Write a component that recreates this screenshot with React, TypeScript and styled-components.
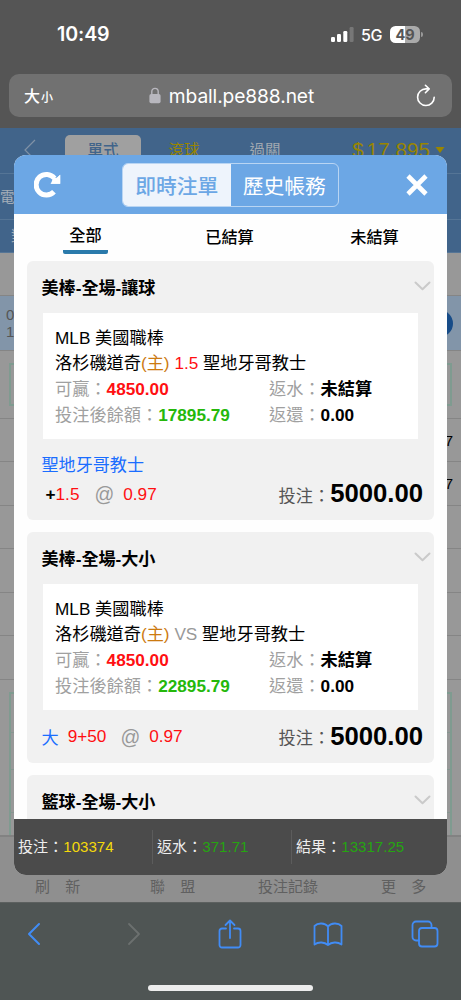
import React from "react";
import styled, { createGlobalStyle } from "styled-components";

const GlobalStyle = createGlobalStyle`
  * { box-sizing: border-box; }
  body {
    margin: 0;
    background: #555;
    font-family: "Liberation Sans", "Noto Sans CJK TC", sans-serif;
    color: #000;
  }
`;

const Phone = styled.div`
  width: 461px;
  height: 1000px;
  overflow: hidden;
  display: flex;
  flex-direction: column;
  background: #555;
`;

/* ---- system and browser chrome ---- */

const StatusBar = styled.header`
  height: 74px;
  padding: 21px 38px 0 57px;
  display: flex;
  justify-content: space-between;
  font-family: Inter, "Liberation Sans", sans-serif;
  color: #fff;
`;

const Clock = styled.div`
  font-size: 19.6px;
  font-weight: 600;
  line-height: 27px;
  letter-spacing: -0.1px;
`;

const StatusIcons = styled.div`
  display: flex;
  align-items: center;
  height: 27px;
`;

const Network = styled.span`
  margin: 1px 0 0 7px;
  width: 29px;
  font-size: 16px;
  font-weight: 500;
  letter-spacing: -0.4px;
`;

const Battery = styled.div`
  width: 30px;
  height: 17px;
  border-radius: 5.5px;
  background: linear-gradient(90deg, #fff 50%, #aaa 50%);
  color: #555;
  font-size: 14.5px;
  font-weight: 700;
  line-height: 17px;
  text-align: center;
`;

const BatteryTip = styled.div`
  width: 2px;
  height: 5px;
  margin-left: 1px;
  border-radius: 0 2px 2px 0;
  background: #999;
`;

const AddressBar = styled.div`
  height: 43px;
  margin: 0 9px 11px;
  padding: 0 16px 0 15px;
  border-radius: 10px;
  background: #717171;
  display: flex;
  align-items: center;
  justify-content: space-between;
  color: #fff;
  flex-shrink: 0;
`;

const TextSize = styled.div`
  width: 33px;
  font: 500 16px "Noto Sans CJK TC", sans-serif;
  line-height: 30px;
  white-space: nowrap;
  small { font-size: 12px; margin-left: 1px; }
`;

const Address = styled.div`
  display: flex;
  align-items: center;
  margin-right: 10px;
  font-family: Inter, sans-serif;
  font-size: 19.2px;
  letter-spacing: -0.1px;
  svg { margin-right: 8px; }
`;

const BrowserToolbar = styled.footer`
  height: 98px;
  flex-shrink: 0;
  display: flex;
  flex-direction: column;
  justify-content: space-between;
  padding: 16px 21px 9px 26px;
  background: #4f5554;
  border-top: 1px solid #5c605f;
`;

const ToolIcons = styled.div`
  display: grid;
  grid-template-columns: 100px 92px 95px 98px 1fr;
  align-items: center;
`;

const HomeIndicator = styled.div`
  width: 165px;
  height: 6px;
  margin-left: 122px;
  border-radius: 3px;
  background: #ededed;
`;

/* ---- dimmed page behind the dialog ---- */

const Stage = styled.main`
  position: relative;
  height: 774px;
  flex-shrink: 0;
  overflow: hidden;
`;

const Page = styled.div`
  height: 774px;
  display: flex;
  flex-direction: column;
  background: #989898;
`;

const PageNav = styled.div`
  height: 46px;
  flex-shrink: 0;
  display: flex;
  align-items: flex-start;
  padding: 7px 15px 0 23px;
  background: #41648a;
  border-bottom: 1px solid #557596;
  font-size: 15.5px;
  line-height: 32px;
`;

const NavTab = styled.div<{ $active?: boolean; $tone?: string; $w: number }>`
  width: ${(p) => p.$w}px;
  height: 38px;
  text-align: center;
  border-radius: 5px;
  background: ${(p) => (p.$active ? "#a0a0a0" : "transparent")};
  color: ${(p) => p.$tone ?? "#41648a"};
  font-weight: ${(p) => (p.$active ? 500 : 400)};
`;

const Balance = styled.div`
  margin-left: auto;
  display: flex;
  align-items: center;
  font-size: 20.5px;
  line-height: 30px;
  color: #998500;
  letter-spacing: 0.1px;
  svg { margin-left: 5px; }
`;

const Currency = styled.span`
  margin-right: 3px;
`;

const BlueRow = styled.div<{ $h: number; $indent?: number }>`
  height: ${(p) => p.$h}px;
  flex-shrink: 0;
  padding-left: ${(p) => p.$indent ?? 0}px;
  line-height: ${(p) => p.$h}px;
  font-size: 14.5px;
  white-space: nowrap;
  background: #41648a;
  border-bottom: 1px solid #557596;
  color: #a5aeb8;
`;

const Row = styled.div<{ $h: number; $bg?: string }>`
  height: ${(p) => p.$h}px;
  flex-shrink: 0;
  display: flex;
  align-items: center;
  justify-content: space-between;
  padding: 0 8px;
  background: ${(p) => p.$bg ?? "#989898"};
  border-bottom: 1px solid #858585;
`;

const GameTime = styled.div`
  margin-left: -2px;
  font-size: 15px;
  line-height: 17.5px;
  color: #555;
`;

const RoundButton = styled.div`
  width: 27px;
  height: 27px;
  border-radius: 50%;
  background: #174c88;
  color: #8fa5bd;
  text-align: center;
  line-height: 26px;
`;

const OddsBox = styled.div`
  flex: 1;
  height: 43px;
  margin: 0 1px;
  border: 2px solid #7f9b90;
`;

const Odds = styled.div`
  margin-left: auto;
  font-size: 15px;
`;

const OddsGrid = styled.div`
  height: 143px;
  margin: 12px 9px 0;
  flex-shrink: 0;
  display: grid;
  grid-template-rows: 39px 37px 43px 1fr;
  border: 2px solid #7f9b90;
  border-bottom: 0;
`;

const OddsCell = styled.div`
  border-bottom: 1px solid #869690;
`;

const PageTabs = styled.div`
  flex: 1;
  display: grid;
  grid-template-columns: 115px 108px 123px 1fr;
  align-items: end;
  padding: 0 0 4px 35px;
  background: #8f8f8f;
  border-top: 2px solid #828282;
  color: #606060;
  font-size: 15px;
  line-height: 22px;
  white-space: pre;
`;

const PageTab = styled.span<{ $spread?: boolean }>`
  word-spacing: ${(p) => (p.$spread ? "11px" : "0")};
`;

/* ---- bet history dialog ---- */

const Dialog = styled.section`
  position: absolute;
  left: 14px;
  top: 27px;
  width: 433px;
  height: 720px;
  border-radius: 12px;
  overflow: hidden;
  display: flex;
  flex-direction: column;
  background: #fefefe;
`;

const DialogHeader = styled.div`
  height: 59px;
  flex-shrink: 0;
  display: flex;
  align-items: center;
  justify-content: space-between;
  padding: 0 19px 0 20px;
  background: #6ca7e5;
`;

const Segmented = styled.div`
  width: 217px;
  height: 44px;
  display: flex;
  border: 1px solid #b9d5f3;
  border-radius: 6px;
  overflow: hidden;
  margin-right: 6px;
`;

const Segment = styled.div<{ $active?: boolean }>`
  flex: 1;
  text-align: center;
  line-height: 45px;
  font-size: 20.8px;
  font-weight: ${(p) => (p.$active ? 500 : 400)};
  background: ${(p) => (p.$active ? "#eef4fc" : "transparent")};
  color: ${(p) => (p.$active ? "#6ca7e5" : "#fff")};
`;

const FilterTabs = styled.div`
  height: 47px;
  flex-shrink: 0;
  display: grid;
  grid-template-columns: 143px 145px 145px;
  justify-items: center;
  align-items: start;
`;

const FilterTab = styled.div<{ $active?: boolean }>`
  height: 40px;
  padding: 0 6px;
  line-height: ${(p) => (p.$active ? 43 : 47)}px;
  font-size: 16.2px;
  font-weight: 500;
  border-bottom: ${(p) => (p.$active ? "4px solid #2a7aab" : "0")};
  border-radius: 2px;
`;

const CardList = styled.div`
  flex: 1;
  min-height: 0;
  overflow: hidden;
  padding: 0 13px;
  display: flex;
  flex-direction: column;
  gap: 12px;
`;

const Card = styled.article`
  flex-shrink: 0;
  border-radius: 6px;
  background: #f1f1f1;
`;

const CardTitle = styled.div`
  height: 51.5px;
  display: flex;
  align-items: center;
  justify-content: space-between;
  padding: 0 3.5px 1px 14.5px;
  font-size: 17.1px;
  font-weight: 700;
`;

const Detail = styled.div`
  height: 126.5px;
  margin: 0 16px;
  padding: 13.2px 12px 0;
  background: #fff;
  font-size: 17.2px;
  line-height: 25.8px;
  white-space: nowrap;
`;

const DetailLine = styled.div`
  height: 25.8px;
  display: grid;
  grid-template-columns: 214px 1fr;
`;

const Tone = styled.span<{ $c: string }>`
  color: ${(p) => p.$c};
`;

const Label = styled.span`
  color: #a0a0a0;
`;

const Value = styled.b<{ $c?: string }>`
  color: ${(p) => p.$c ?? "#000"};
`;

const Sign = styled(Value)`
  margin-left: 4px;
`;

const Pick = styled.div`
  padding: 14px 14.5px 0;
  height: 39px;
  font-size: 17.1px;
  line-height: 25px;
  color: #1a6dff;
`;

const Side = styled.span`
  margin-right: 9px;
  color: #1a6dff;
`;

const StakeRow = styled.div<{ $h: number; $lift?: number }>`
  height: ${(p) => p.$h}px;
  padding: 0 11px ${(p) => p.$lift ?? 0}px 14.5px;
  display: flex;
  align-items: center;
  justify-content: space-between;
  font-size: 17.2px;
`;

const Selection = styled.div`
  display: flex;
  align-items: center;
  color: #ff0f12;
`;

const At = styled.span<{ $before: number }>`
  margin: 0 9px 0 ${(p) => p.$before}px;
  font-size: 19.5px;
  line-height: 24px;
  color: #999;
`;

const Stake = styled.div`
  display: flex;
  align-items: center;
  color: #555;
  b { font-size: 25.7px; line-height: 30px; color: #000; margin-bottom: 2px; }
`;

const Totals = styled.div`
  height: 56px;
  flex-shrink: 0;
  display: grid;
  grid-template-columns: 139px 139px 1fr;
  align-items: center;
  background: #4b4b4b;
  color: #eee;
  font-size: 15.1px;
`;

const Total = styled.div<{ $c: string }>`
  height: 34px;
  line-height: 34px;
  padding-left: 4px;
  white-space: nowrap;
  border-right: 1px solid #5c5c5c;
  &:last-child { border-right: 0; }
  span { color: ${(p) => p.$c}; }
`;

const RED = "#ff0f12";
const GREEN = "#25b80b";

type Bet = {
  title: string;
  middle: React.ReactNode;
  balance: string;
  pick?: string;
  selection: React.ReactNode;
};

const bets: Bet[] = [
  {
    title: "美棒-全場-讓球",
    middle: <Tone $c={RED}>1.5</Tone>,
    balance: "17895.79",
    pick: "聖地牙哥教士",
    selection: (
      <>
        <Sign>+</Sign>1.5<At $before={15}>@</At>0.97
      </>
    ),
  },
  {
    title: "美棒-全場-大小",
    middle: <Tone $c="#999">VS</Tone>,
    balance: "22895.79",
    selection: (
      <>
        <Side>大</Side>9+50<At $before={14}>@</At>0.97
      </>
    ),
  },
];

const Chevron = () => (
  <svg width="17" height="10" viewBox="0 0 17 10" fill="none" stroke="#cacaca" strokeWidth="2" strokeLinecap="round" strokeLinejoin="round">
    <path d="M1.5 1.5 8.5 8.3 15.5 1.5" />
  </svg>
);

const BetCard = ({ bet }: { bet: Bet }) => (
  <Card>
    <CardTitle>{bet.title}<Chevron /></CardTitle>
    <Detail>
      <div>MLB 美國職棒</div>
      <div>洛杉磯道奇<Tone $c="#cc7a10">(主)</Tone> {bet.middle} 聖地牙哥教士</div>
      <DetailLine>
        <div><Label>可贏：</Label><Value $c={RED}>4850.00</Value></div>
        <div><Label>返水：</Label><Value>未結算</Value></div>
      </DetailLine>
      <DetailLine>
        <div><Label>投注後餘額：</Label><Value $c={GREEN}>{bet.balance}</Value></div>
        <div><Label>返還：</Label><Value>0.00</Value></div>
      </DetailLine>
    </Detail>
    {bet.pick && <Pick>{bet.pick}</Pick>}
    <StakeRow $h={bet.pick ? 42 : 53} $lift={bet.pick ? 10 : 0}>
      <Selection>{bet.selection}</Selection>
      <Stake>投注：<b>5000.00</b></Stake>
    </StakeRow>
  </Card>
);

const SignalIcon = () => (
  <svg width="23" height="15" viewBox="0 0 23 15" fill="#fff">
    <rect x="0" y="10" width="4" height="5" rx="1.2" />
    <rect x="6" y="7" width="4" height="8" rx="1.2" />
    <rect x="12.3" y="4" width="4" height="11" rx="1.2" />
    <rect x="18.6" y="0" width="4" height="15" rx="1.2" fill="#777" />
  </svg>
);

const LockIcon = () => (
  <svg width="12" height="17" viewBox="0 0 12 17">
    <path d="M2.8 8V4.6a3.2 3.2 0 0 1 6.4 0V8" fill="none" stroke="#b8b7be" strokeWidth="1.4" />
    <rect x="0.4" y="7" width="11.2" height="9.2" rx="1.8" fill="#b8b7be" />
  </svg>
);

const ReloadIcon = () => (
  <svg width="20" height="23" viewBox="0 0 20 23" fill="none" stroke="#fff" strokeWidth="1.6" strokeLinecap="round" strokeLinejoin="round">
    <path d="M18.2 13.2A8.3 8.3 0 1 1 10 4.9h2.7" />
    <path d="M9.4 1.3 13.1 4.9 9.4 8.7" />
  </svg>
);

const RefreshIcon = () => (
  <svg width="27" height="28" viewBox="0 0 27 28">
    <path d="M20 20.7A10.3 10.3 0 1 1 20.5 7.3" fill="none" stroke="#fff" strokeWidth="5" />
    <path d="M26.2 3.8v9H16.3Z" fill="#fff" />
    <path d="M26.2 3.8v9H17l2-6 4 0Z" fill="#fff" />
  </svg>
);

const CloseIcon = () => (
  <svg width="22" height="22" viewBox="0 0 22 22" stroke="#fff" strokeWidth="4.6">
    <path d="M2 2 20 20M20 2 2 20" />
  </svg>
);

const BackIcon = styled.svg`
  display: block;
  margin-top: 4px;
`;

const icon = { fill: "none", stroke: "#418cf5", strokeWidth: 1.8, strokeLinecap: "round", strokeLinejoin: "round" } as const;

export default function App() {
  return (
    <>
      <GlobalStyle />
      <Phone lang="zh-Hant">
        <StatusBar>
          <Clock>10:49</Clock>
          <StatusIcons>
            <SignalIcon />
            <Network>5G</Network>
            <Battery>49</Battery>
            <BatteryTip />
          </StatusIcons>
        </StatusBar>
        <AddressBar>
          <TextSize>大<small>小</small></TextSize>
          <Address><LockIcon />mball.pe888.net</Address>
          <ReloadIcon />
        </AddressBar>

        <Stage>
          <Page>
            <PageNav>
              <NavTab $w={42}>
                <BackIcon width="14" height="22" viewBox="0 0 14 22" fill="none" stroke="#8092a6" strokeWidth="1.2">
                  <path d="M12 1 2 11 12 21" />
                </BackIcon>
              </NavTab>
              <NavTab $w={76} $active>單式</NavTab>
              <NavTab $w={86} $tone="#998500">滾球</NavTab>
              <NavTab $w={76} $tone="#a0a8b0">過關</NavTab>
              <Balance>
                <Currency>$</Currency>17,895
                <svg width="11" height="6" viewBox="0 0 11 6" fill="#998500"><path d="M0.5 0h9L5 6Z" /></svg>
              </Balance>
            </PageNav>
            <BlueRow $h={46}>電</BlueRow>
            <BlueRow $h={33} $indent={11}>對</BlueRow>
            <Row $h={43} />
            <Row $h={55} $bg="#8295a9">
              <GameTime>09<br />10</GameTime>
              <RoundButton>+</RoundButton>
            </Row>
            <Row $h={68}><OddsBox /></Row>
            <Row $h={43}><Odds>7</Odds></Row>
            <Row $h={44}><Odds>7</Odds></Row>
            <Row $h={43} />
            <Row $h={44} />
            <Row $h={43} />
            <Row $h={44} />
            <OddsGrid>
              <OddsCell /><OddsCell /><OddsCell /><div />
            </OddsGrid>
            <PageTabs>
              <PageTab $spread>刷 新</PageTab>
              <PageTab $spread>聯 盟</PageTab>
              <PageTab>投注記錄</PageTab>
              <PageTab $spread>更 多</PageTab>
            </PageTabs>
          </Page>

          <Dialog>
            <DialogHeader>
              <RefreshIcon />
              <Segmented>
                <Segment $active>即時注單</Segment>
                <Segment>歷史帳務</Segment>
              </Segmented>
              <CloseIcon />
            </DialogHeader>
            <FilterTabs>
              <FilterTab $active>全部</FilterTab>
              <FilterTab>已結算</FilterTab>
              <FilterTab>未結算</FilterTab>
            </FilterTabs>
            <CardList>
              {bets.map((bet) => <BetCard key={bet.title} bet={bet} />)}
              <Card><CardTitle>籃球-全場-大小<Chevron /></CardTitle></Card>
            </CardList>
            <Totals>
              <Total $c="#f5d90a">投注：<span>103374</span></Total>
              <Total $c="#25a510">返水：<span>371.71</span></Total>
              <Total $c="#25a510">結果：<span>13317.25</span></Total>
            </Totals>
          </Dialog>
        </Stage>

        <BrowserToolbar>
          <ToolIcons>
            <svg width="16" height="24" viewBox="0 0 16 24" {...icon} strokeWidth={2}><path d="M13 2 3 12 13 22" /></svg>
            <svg width="16" height="24" viewBox="0 0 16 24" {...icon} stroke="#6c706f"><path d="M3 2 13 12 3 22" /></svg>
            <svg width="24" height="30" viewBox="0 0 24 30" {...icon}>
              <path d="M8 9.5H4a2.5 2.5 0 0 0-2.5 2.5v14A2.5 2.5 0 0 0 4 28.5h16a2.5 2.5 0 0 0 2.5-2.5V12A2.5 2.5 0 0 0 20 9.5h-4M12 19V2M7.5 6 12 1.5 16.5 6" />
            </svg>
            <svg width="30" height="25" viewBox="0 0 30 25" {...icon}>
              <path d="M15 4.5C12 .8 5 .4 1.5 4v18.5c4-3 10-2.5 13.5.5 3.5-3 9.5-3.5 13.5-.5V4C25 .4 18 .8 15 4.5ZM15 4.5V23" />
            </svg>
            <svg width="28" height="28" viewBox="0 0 28 28" {...icon}>
              <rect x="8" y="8" width="18.5" height="18.5" rx="3" />
              <path d="M8 20.5H5A3.5 3.5 0 0 1 1.5 17V5A3.5 3.5 0 0 1 5 1.5h12A3.5 3.5 0 0 1 20.5 5v3" />
            </svg>
          </ToolIcons>
          <HomeIndicator />
        </BrowserToolbar>
      </Phone>
    </>
  );
}
